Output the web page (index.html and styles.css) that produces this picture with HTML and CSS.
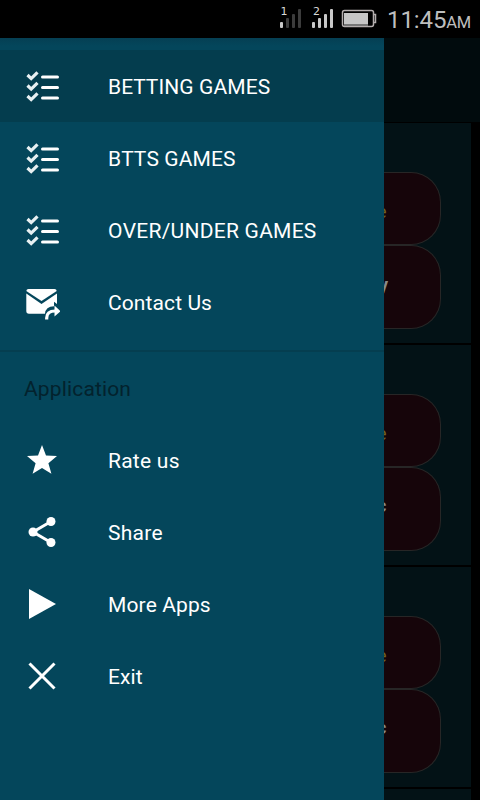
FILE: index.html
```html
<!DOCTYPE html>
<html>
<head>
	<meta charset="utf-8">
	<title>Betting Games</title>
	<link rel="stylesheet" href="styles.css">
</head>
<body>
	<svg class="defs">
		<symbol id="list" viewBox="0 0 36 36">
			<path d="M3.500 7l3.700 3.600 6.300-6.300M3.500 17.500l3.700 3.600 6.300-6.300M3.500 28l3.700 3.600 6.300-6.300" fill="none" stroke="#e8f0f2" stroke-width="3.200"/>
			<path d="M18.500 9h15M18.500 19.500h15M18.500 30h15" stroke="#fff" stroke-width="3" stroke-linecap="round"/>
		</symbol>
	</svg>
	<div class="status">
		<svg width="106" height="38">
			<g fill="#c8c8c8">
				<rect x="4" y="22" width="3" height="6" rx="1"/>
				<rect x="36" y="22" width="3" height="6" rx="1"/>
				<rect x="42" y="18" width="3" height="10" rx="1"/>
				<rect x="48" y="14" width="3" height="14" rx="1"/>
				<rect x="54" y="9" width="3" height="19" rx="1"/>
			</g>
			<g fill="#3c3c3c">
				<rect x="10" y="18" width="3" height="10" rx="1"/>
				<rect x="16" y="14" width="3" height="14" rx="1"/>
				<rect x="22" y="9" width="3" height="19" rx="1"/>
			</g>
			<text x="4.500" y="15" class="sim">1</text>
			<text x="37" y="15" class="sim">2</text>
			<rect x="66.500" y="10.500" width="31" height="16" rx="2" fill="none" stroke="#b4aeae" stroke-width="1.500"/>
			<rect x="68" y="13" width="24" height="11" fill="#c6c6c6"/>
			<rect x="68" y="24" width="24" height="2" fill="#777"/>
			<path d="M98 14.500h1.500v8h-1.500" fill="none" stroke="#b4aeae" stroke-width="1.500"/>
		</svg>
		<div class="clock">11:45<span>AM</span></div>
	</div>
	<div class="screen">
		<div class="drawer">
			<div class="item active">
				<svg class="icon"><use href="#list"/></svg>
				<span>BETTING GAMES</span>
			</div>
			<div class="item">
				<svg class="icon"><use href="#list"/></svg>
				<span>BTTS GAMES</span>
			</div>
			<div class="item">
				<svg class="icon"><use href="#list"/></svg>
				<span class="wide">OVER/UNDER GAMES</span>
			</div>
			<div class="item">
				<svg class="icon" viewBox="0 0 36 36">
					<path d="M4.500 5h26q2 0 2.200 2L17.500 17 2.300 7q.2-2 2.200-2z" fill="#fff"/>
					<path d="M2.300 9.500L17.500 20 33 9.500V20l-3-2.300v4.500q-8.500.3-9 7.500H5q-2.700 0-2.700-2.700z" fill="#fff"/>
					<path d="M22.700 35.500v-1.500q0-7 8.500-7" fill="none" stroke="#fff" stroke-width="3.200"/>
					<path d="M30.500 21.500l6 5.700-6 5.300z" fill="#fff"/>
				</svg>
				<span>Contact Us</span>
			</div>
			<div class="line"></div>
			<div class="title">Application</div>
			<div class="item">
				<svg class="icon" viewBox="0 0 36 36">
					<path d="M18 3l4 10.500 11 .5-8.600 7.300 3 10.500L18 26l-9.400 5.800 3-10.500L3 14l11-.5z" fill="#fff"/>
				</svg>
				<span class="wide">Rate us</span>
			</div>
			<div class="item">
				<svg class="icon" viewBox="0 0 36 36">
					<path d="M27 7.500L9 18l18 10.500" fill="none" stroke="#fff" stroke-width="3"/>
					<circle cx="27" cy="7.500" r="4.500" fill="#fff"/>
					<circle cx="9" cy="18" r="4.500" fill="#fff"/>
					<circle cx="27" cy="28.500" r="4.500" fill="#fff"/>
				</svg>
				<span class="wide">Share</span>
			</div>
			<div class="item">
				<svg class="icon" viewBox="0 0 36 36">
					<path d="M5 3l27 15L5 33z" fill="#fff"/>
				</svg>
				<span>More Apps</span>
			</div>
			<div class="item">
				<svg class="icon" viewBox="0 0 36 36">
					<path d="M5.500 5.500l25 25M30.500 5.500l-25 25" stroke="#fff" stroke-width="3"/>
				</svg>
				<span>Exit</span>
			</div>
		</div>
		<!-- part of the page not covered by the drawer -->
		<div class="page">
			<div class="toolbar"></div>
			<div class="card">
				<div class="pill home"><span>e</span></div>
				<div class="pill away"><span class="y">y</span></div>
			</div>
			<div class="card">
				<div class="pill home"><span>e</span></div>
				<div class="pill away"><span>c</span></div>
			</div>
			<div class="card">
				<div class="pill home"><span>e</span></div>
				<div class="pill away"><span>c</span></div>
			</div>
			<div class="card"></div>
		</div>
	</div>
</body>
</html>
```
FILE: styles.css
```css
*{
	padding: 0;
	margin: 0;
	box-sizing: border-box;
}
body{
	width: 480px;
	height: 800px;
	overflow: hidden;
	background: #000;
	font-family: Roboto, "Liberation Sans", sans-serif;
	font-kerning: none;
	color: #fff;
}
.defs{
	display: none;
}
.status{
	display: flex;
	height: 38px;
	padding-left: 276px;
	color: #bebebe;
}
.sim{
	font: 11px "DejaVu Sans", sans-serif;
	fill: #d8d8d8;
}
.clock{
	margin-left: 5px;
	font-size: 24px;
	line-height: 40px;
	letter-spacing: -0.1px;
	white-space: nowrap;
}
.clock span{
	font-size: 16.5px;
	letter-spacing: -0.4px;
}
.screen{
	display: flex;
	height: 762px;
}
.drawer{
	width: 384px;
	padding-top: 12px;
	background: linear-gradient(#053f53, #04465b 8px);
}
.item{
	display: flex;
	align-items: center;
	height: 72px;
	padding-left: 24px;
	font-size: 21px;
	letter-spacing: 0.1px;
}
.item span{
	padding-top: 2px;
}
.item .wide{
	letter-spacing: 0.25px;
}
.active{
	background: #043d4e;
}
.icon{
	width: 36px;
	height: 36px;
	margin-right: 48px;
}
.line{
	height: 2px;
	margin-top: 12px;
	background: #053e50;
}
.title{
	height: 72px;
	padding-left: 24px;
	font-size: 21px;
	line-height: 74px;
	letter-spacing: 0.15px;
	color: #03222d;
}
.page{
	width: 96px;
	overflow: hidden;
}
.toolbar{
	height: 84px;
	margin-bottom: 1px;
	background: #010b0d;
}
.card{
	width: 87px;
	height: 220px;
	margin-bottom: 2px;
	padding-top: 49px;
	background: #031216;
}
.pill{
	display: flex;
	align-items: center;
	width: 57px;
	overflow: hidden;
	border: 1px solid #272626;
	border-left: 0;
	border-radius: 0 30px 30px 0;
	background: #16050a;
	font-size: 18px;
}
.pill span{
	margin-left: -7px;
}
.home{
	height: 73px;
	padding-top: 6px;
	color: #75611f;
}
.away{
	height: 84px;
	padding-bottom: 8px;
	font-weight: bold;
	color: #8a8a8a;
}
.pill .y{
	margin: 3px 0 0 -5px;
}
```
